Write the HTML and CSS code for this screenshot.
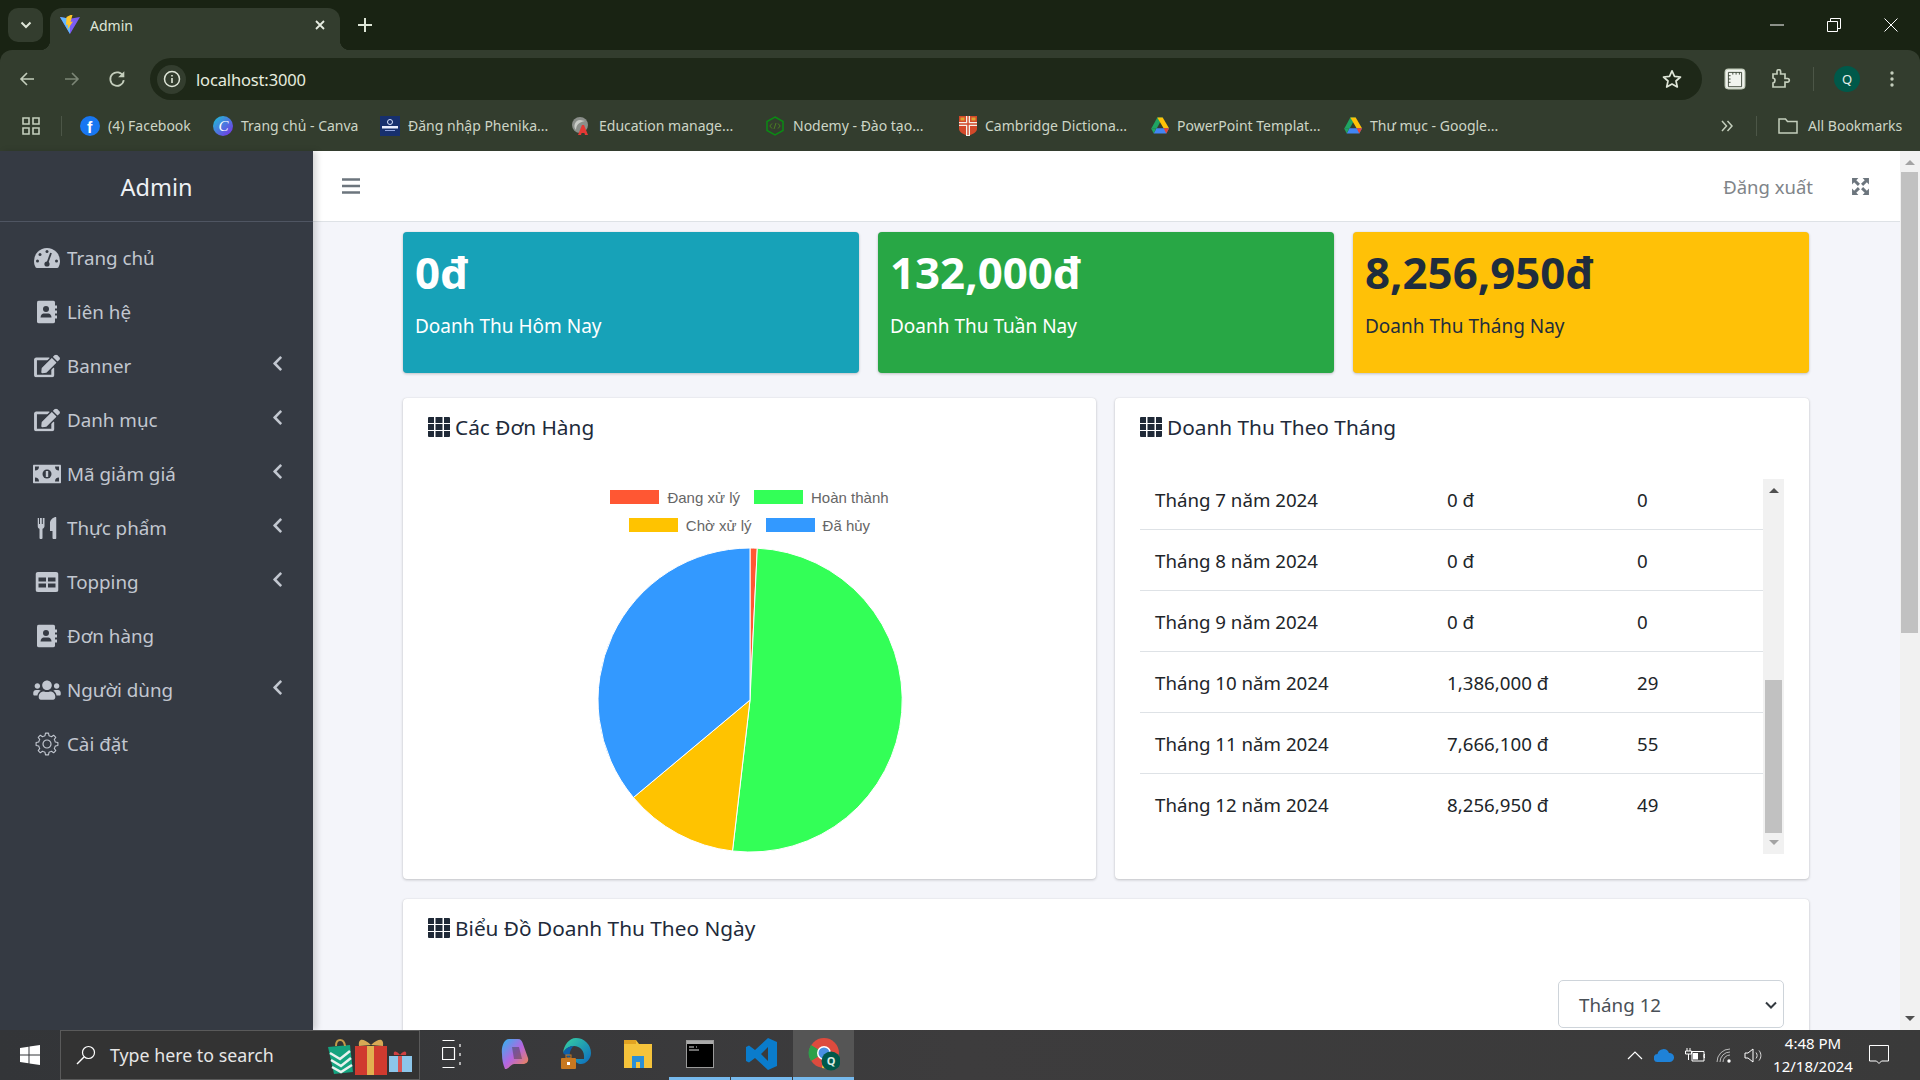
FILE: index.html
```html
<!DOCTYPE html>
<html lang="vi">
<head>
<meta charset="utf-8">
<title>Admin</title>
<link rel="stylesheet" href="styles.css">
</head>
<body>
<svg class="defs" width="0" height="0" aria-hidden="true">
  <defs>
    <symbol id="i-dash" viewBox="0 0 26 20"><path d="M13 0A13 13 0 0 0 0 13c0 2.400.6 4.600 1.700 6.500.3.300.7.500 1.100.5h20.400c.4 0 .8-.2 1.100-.5C25.400 17.600 26 15.400 26 13A13 13 0 0 0 13 0z" fill="#c2c7d0"/><circle cx="13" cy="3.500" r="1.500" fill="#353a43"/><circle cx="6" cy="6.500" r="1.500" fill="#353a43"/><circle cx="3.500" cy="13" r="1.500" fill="#353a43"/><circle cx="22.500" cy="13" r="1.500" fill="#353a43"/><circle cx="13" cy="16" r="2.600" fill="#353a43"/><path d="M13 16L17 5" stroke="#353a43" stroke-width="1.800"/></symbol>
    <symbol id="i-book" viewBox="0 0 20 23"><path d="M2 0h14a2 2 0 0 1 2 2v19a2 2 0 0 1-2 2H2a2 2 0 0 1-2-2V2a2 2 0 0 1 2-2z" fill="#c2c7d0"/><path d="M18 5h2v3h-2zM18 10h2v3h-2zM18 15h2v3h-2z" fill="#c2c7d0"/><circle cx="9" cy="8.500" r="3" fill="#353a43"/><path d="M3.500 17c0-2.500 2-4 3-4h5c1 0 3 1.500 3 4z" fill="#353a43"/></symbol>
    <symbol id="i-edit" viewBox="0 0 576 512"><path fill="#c2c7d0" d="M402.600 83.200l90.200 90.200c3.800 3.800 3.800 10 0 13.800L274.400 405.600l-92.800 10.300c-12.400 1.400-22.900-9.100-21.500-21.500l10.300-92.800L388.800 83.200c3.800-3.800 10-3.800 13.800 0zm162-22.900l-48.800-48.800c-15.200-15.200-39.900-15.200-55.200 0l-35.400 35.400c-3.800 3.800-3.800 10 0 13.800l90.200 90.200c3.800 3.800 10 3.800 13.800 0l35.400-35.400c15.200-15.300 15.200-40 0-55.200zM384 346.200V448H64V128h229.800c3.200 0 6.200-1.300 8.500-3.500l40-40c7.600-7.600 2.200-20.500-8.500-20.500H48C21.500 64 0 85.500 0 112v352c0 26.500 21.500 48 48 48h352c26.500 0 48-21.500 48-48V306.200c0-10.700-12.900-16-20.500-8.500l-40 40c-2.200 2.300-3.500 5.300-3.500 8.500z"/></symbol>
    <symbol id="i-money" viewBox="0 0 28 19"><rect width="28" height="19" rx="1" fill="#c2c7d0"/><circle cx="14" cy="9.500" r="4.500" fill="#353a43"/><rect x="12.800" y="6.500" width="2.400" height="6" fill="#c2c7d0"/><path d="M2 2h4a4 4 0 0 1-4 4zM26 2h-4a4 4 0 0 0 4 4zM2 17h4a4 4 0 0 0-4-4zM26 17h-4a4 4 0 0 1 4-4z" fill="#353a43"/></symbol>
    <symbol id="i-food" viewBox="0 0 19 22"><path d="M0 1h1.500v6h1V1h1.800v6h1V1H7v8c0 1.400-1 2.500-2 2.800V21a1 1 0 0 1-1 1H3a1 1 0 0 1-1-1v-9.200C1 11.500 0 10.400 0 9zM19 1v20a1 1 0 0 1-1 1h-2a1 1 0 0 1-1-1v-7h-2.500V6c0-3 3-5.500 5.500-6 .6 0 1 .4 1 1z" fill="#c2c7d0"/></symbol>
    <symbol id="i-table" viewBox="0 0 23 20"><rect width="23" height="20" rx="2.500" fill="#c2c7d0"/><path d="M3 5.500h7.500v4H3zM12.500 5.500H20v4h-7.500zM3 11.500h7.500v4H3zM12.500 11.500H20v4h-7.500z" fill="#353a43"/></symbol>
    <symbol id="i-users" viewBox="0 0 640 512"><path fill="#c2c7d0" d="M96 224c35.300 0 64-28.700 64-64s-28.700-64-64-64-64 28.700-64 64 28.700 64 64 64zm448 0c35.300 0 64-28.700 64-64s-28.700-64-64-64-64 28.700-64 64 28.700 64 64 64zm32 32h-64c-17.600 0-33.500 7.100-45.100 18.600 40.300 22.100 68.900 62 75.100 109.400h66c17.700 0 32-14.300 32-32v-32c0-35.300-28.700-64-64-64zm-256 0c61.900 0 112-50.100 112-112S381.900 32 320 32 208 82.100 208 144s50.100 112 112 112zm76.800 32h-8.300c-20.800 10-43.900 16-68.500 16s-47.600-6-68.500-16h-8.300C179.600 288 128 339.600 128 403.200V432c0 26.500 21.500 48 48 48h288c26.500 0 48-21.500 48-48v-28.800c0-63.600-51.600-115.200-115.200-115.200zm-223.700-13.400C161.500 263.100 145.600 256 128 256H64c-35.300 0-64 28.700-64 64v32c0 17.700 14.300 32 32 32h65.900c6.300-47.400 34.900-87.300 75.200-109.400z"/></symbol>
    <path id="tooth" d="M-3.250-7.850L-2-8.300-1.500-10.900H1.500L2-8.300 3.250-7.850" fill="none" stroke="#c2c7d0" stroke-width="1.100" stroke-linejoin="round"/>
    <symbol id="i-gear" viewBox="0 0 26 26"><g transform="translate(13 13)"><circle r="4" fill="none" stroke="#c2c7d0" stroke-width="1.200"/><use href="#tooth"/><use href="#tooth" transform="rotate(45)"/><use href="#tooth" transform="rotate(90)"/><use href="#tooth" transform="rotate(135)"/><use href="#tooth" transform="rotate(180)"/><use href="#tooth" transform="rotate(225)"/><use href="#tooth" transform="rotate(270)"/><use href="#tooth" transform="rotate(315)"/></g></symbol>
    <symbol id="i-left" viewBox="0 0 320 512"><path fill="#c2c7d0" d="M34.520 239.030L228.870 44.690c9.370-9.370 24.570-9.370 33.940 0l22.670 22.670c9.360 9.360 9.370 24.520.04 33.900L131.490 256l154.020 154.750c9.340 9.380 9.320 24.540-.04 33.900l-22.670 22.670c-9.370 9.370-24.570 9.370-33.940 0L34.520 272.970c-9.370-9.370-9.370-24.570 0-33.940z"/></symbol>
    <symbol id="i-th" viewBox="0 0 22 20"><path fill="#1f2937" d="M0 1a1 1 0 0 1 1-1h5v6H0zM7.500 0h7v6h-7zM16 0h5a1 1 0 0 1 1 1v5h-6zM0 7h6v6H0zM7.500 7h7v6h-7zM16 7h6v6h-6zM0 14h6v6H1a1 1 0 0 1-1-1zM7.500 14h7v6h-7zM16 14h6v5a1 1 0 0 1-1 1h-5z"/></symbol>
    <symbol id="i-drive" viewBox="0 0 20 18"><path d="M7 0h6l-3.500 6.500L6.500 12H0.500z" fill="#1fa463"/><path d="M7 0h6l7 12h-6z" fill="#ffc107"/><path d="M6 12h14l-3 6H3z" fill="#4285f4"/><path d="M0 12h6l-3 6z" fill="#1fa463"/><path d="M14 12h6l-3 6z" fill="#ea4335"/></symbol>
  </defs>
</svg>

<header class="browser">
  <div class="tabstrip">
    <div class="tab-search"><svg width="12" height="8" viewBox="0 0 12 8"><path d="M1.500 1.500L6 6l4.500-4.500" fill="none" stroke="#dfe6d8" stroke-width="2"/></svg></div>
    <div class="tab">
      <svg class="favicon" width="20" height="20" viewBox="0 0 20 20"><path d="M0 2l10 17L20 2l-10 1.800z" fill="#7c5cf5"/><path d="M0 2l10 17V3.800z" fill="#62b8ff"/><path d="M10.500 0L6.500 2l-.5 8 2-.5-.5 5L13 6.500l-2.500.5L12.500 0z" fill="#ffc62b"/></svg>
      <span class="tab-title">Admin</span>
      <svg class="tab-close" width="10" height="10" viewBox="0 0 10 10"><path d="M1 1l8 8M9 1l-8 8" stroke="#e7ede2" stroke-width="1.800"/></svg>
    </div>
    <svg class="new-tab" width="14" height="14" viewBox="0 0 14 14"><path d="M7 0v14M0 7h14" stroke="#dde5d6" stroke-width="2"/></svg>
    <div class="win-controls">
      <svg width="14" height="14" viewBox="0 0 14 14"><path d="M0 7h14" stroke="#fff" stroke-width="1"/></svg>
      <svg width="14" height="14" viewBox="0 0 14 14"><path d="M.5 3.500h10v10H.5zM3.500 3.500v-3h10v10h-3" fill="none" stroke="#fff"/></svg>
      <svg width="14" height="14" viewBox="0 0 14 14"><path d="M.5.500l13 13M13.500.500l-13 13" stroke="#fff"/></svg>
    </div>
  </div>
  <div class="toolbar">
    <div class="nav-icons">
      <svg width="18" height="16" viewBox="0 0 16 16"><path d="M15 8H2M8 2L2 8l6 6" fill="none" stroke="#c4cebc" stroke-width="1.600"/></svg>
      <svg width="18" height="16" viewBox="0 0 16 16"><path d="M1 8h13M8 2l6 6-6 6" fill="none" stroke="#7c8676" stroke-width="1.600"/></svg>
      <svg width="18" height="18" viewBox="0 0 16 16"><path d="M13.500 5.500A6 6 0 1 0 14 9" fill="none" stroke="#c4cebc" stroke-width="1.600"/><path d="M14.500 1v5.500H9z" fill="#c4cebc"/></svg>
    </div>
    <div class="omnibox">
      <div class="site-info"><svg width="18" height="18" viewBox="0 0 18 18"><circle cx="9" cy="9" r="7.500" fill="none" stroke="#dfe6d8" stroke-width="1.500"/><path d="M9 8v5M9 5v1.600" stroke="#dfe6d8" stroke-width="1.600"/></svg></div>
      <span class="url">localhost:3000</span>
      <svg class="star" width="20" height="20" viewBox="0 0 20 20"><path d="M10 1.800l2.500 5.600 6 .6-4.500 4 1.300 6L10 15l-5.300 3 1.300-6-4.500-4 6-.6z" fill="none" stroke="#dfe6d8" stroke-width="1.700" stroke-linejoin="round"/></svg>
    </div>
    <div class="tool-icons">
      <svg class="ti-a" width="22" height="22" viewBox="0 0 20 20"><rect x="1" y="1" width="18" height="18" rx="3" fill="#f1f4ee" stroke="#c4cebc"/><path d="M4 4h12v13H4z" fill="none" stroke="#333d2e" stroke-width=".8"/><path d="M4 7h2M4 10h2M4 13h2M8 4v2M11 4v2M14 4v2" stroke="#333d2e" stroke-width=".8"/></svg>
      <svg class="ti-b" width="20" height="20" viewBox="0 0 20 20"><path d="M2 5h4V2.500a1.800 1.800 0 0 1 3.600 0V5H14v4.500h2.500a1.800 1.800 0 0 1 0 3.600H14V18H2v-4a2.500 2.500 0 0 0 2-2.500A2.500 2.500 0 0 0 2 9z" fill="none" stroke="#c4cebc" stroke-width="1.700"/></svg>
      <span class="ti-sep"></span>
      <span class="avatar">Q</span>
      <svg class="ti-c" width="4" height="16" viewBox="0 0 4 16"><circle cx="2" cy="2" r="1.700" fill="#c4cebc"/><circle cx="2" cy="8" r="1.700" fill="#c4cebc"/><circle cx="2" cy="14" r="1.700" fill="#c4cebc"/></svg>
    </div>
  </div>
  <nav class="bookmarks">
    <svg class="apps" width="18" height="18" viewBox="0 0 18 18"><path d="M1 1h6v6H1zM11 1h6v6h-6zM1 11h6v6H1zM11 11h6v6h-6z" fill="none" stroke="#c4cebc" stroke-width="1.600"/></svg>
    <span class="bm-sep"></span>
    <a class="bm bm-fb"><svg width="20" height="20" viewBox="0 0 20 20"><circle cx="10" cy="10" r="10" fill="#1877f2"/><text x="7" y="17" class="svg-f">f</text></svg><span>(4) Facebook</span></a>
    <a class="bm bm-canva"><svg width="20" height="20" viewBox="0 0 20 20"><defs><linearGradient id="cv" x1="0" y1="0" x2="1" y2="1"><stop offset="0" stop-color="#19c5d6"/><stop offset="1" stop-color="#7d2ae8"/></linearGradient></defs><circle cx="10" cy="10" r="10" fill="url(#cv)"/><text x="5.500" y="15" class="svg-c">C</text></svg><span>Trang chủ - Canva</span></a>
    <a class="bm bm-phe"><svg width="20" height="20" viewBox="0 0 20 20"><rect width="20" height="20" fill="#17306e"/><circle cx="10" cy="6" r="2.500" fill="none" stroke="#dbe4ff"/><rect x="2" y="10" width="16" height="2.500" fill="#e8edff"/><rect x="5" y="14" width="10" height="1" fill="#8fa3dd"/></svg><span>Đăng nhập Phenika...</span></a>
    <a class="bm bm-edu"><svg width="20" height="20" viewBox="0 0 20 20"><circle cx="9" cy="9" r="8" fill="#8b8f8a"/><path d="M9 4a6 6 0 0 0-4 10c0-5 3-8 9-9z" fill="#c8cbc6"/><path d="M7 19l4-10h2l4 10h-3l-.6-2h-2.800l-.6 2z" fill="#e53935"/></svg><span>Education manage...</span></a>
    <a class="bm bm-node"><svg width="20" height="20" viewBox="0 0 20 20"><path d="M10 1l8 4.500v9L10 19l-8-4.500v-9z" fill="none" stroke="#0b8a14" stroke-width="1.500"/><path d="M7 7.500L4.800 10 7 12.500M13 7.500l2.200 2.500-2.200 2.500M11 7l-2 6" fill="none" stroke="#4a7d22" stroke-width="1"/></svg><span>Nodemy - Đào tạo...</span></a>
    <a class="bm bm-cam"><svg width="18" height="20" viewBox="0 0 18 20"><path d="M0 0h18v13c0 3-4 5-9 7-5-2-9-4-9-7z" fill="#d2492a"/><path d="M7 0h4v20H7zM0 6h18v4H0z" fill="#f4efe8"/><path d="M8.300 0h1.400v19H8.300zM0 7.300h18v1.400H0z" fill="#d2492a"/><path d="M1.500 1.500h4v3h-4zM12.500 1.500h4v3h-4z" fill="#d9a531"/></svg><span>Cambridge Dictiona...</span></a>
    <a class="bm bm-drive"><svg width="18" height="17"><use href="#i-drive"/></svg><span>PowerPoint Templat...</span></a>
    <a class="bm bm-dir"><svg width="18" height="17"><use href="#i-drive"/></svg><span>Thư mục - Google...</span></a>
    <svg class="more" width="12" height="12" viewBox="0 0 12 12"><path d="M1 1l4.500 5L1 11M6.500 1l4.500 5-4.500 5" fill="none" stroke="#c4cebc" stroke-width="1.500"/></svg>
    <span class="bm-sep bm-sep-r"></span>
    <a class="bm bm-all"><svg width="20" height="16" viewBox="0 0 20 16"><path d="M1 1h6.500l2 2.500H19v11.500H1z" fill="none" stroke="#c4cebc" stroke-width="1.500"/></svg><span>All Bookmarks</span></a>
  </nav>
</header>

<div class="viewport">
  <aside class="sidebar">
    <div class="brand">Admin</div>
    <ul class="menu">
      <li class="menu-item"><svg class="mi mi-dash"><use href="#i-dash"/></svg><span>Trang chủ</span></li>
      <li class="menu-item"><svg class="mi mi-book"><use href="#i-book"/></svg><span>Liên hệ</span></li>
      <li class="menu-item"><svg class="mi mi-edit"><use href="#i-edit"/></svg><span>Banner</span><svg class="chev"><use href="#i-left"/></svg></li>
      <li class="menu-item"><svg class="mi mi-edit"><use href="#i-edit"/></svg><span>Danh mục</span><svg class="chev"><use href="#i-left"/></svg></li>
      <li class="menu-item"><svg class="mi mi-money"><use href="#i-money"/></svg><span>Mã giảm giá</span><svg class="chev"><use href="#i-left"/></svg></li>
      <li class="menu-item"><svg class="mi mi-food"><use href="#i-food"/></svg><span>Thực phẩm</span><svg class="chev"><use href="#i-left"/></svg></li>
      <li class="menu-item"><svg class="mi mi-table"><use href="#i-table"/></svg><span>Topping</span><svg class="chev"><use href="#i-left"/></svg></li>
      <li class="menu-item"><svg class="mi mi-book"><use href="#i-book"/></svg><span>Đơn hàng</span></li>
      <li class="menu-item"><svg class="mi mi-users"><use href="#i-users"/></svg><span>Người dùng</span><svg class="chev"><use href="#i-left"/></svg></li>
      <li class="menu-item"><svg class="mi mi-gear"><use href="#i-gear"/></svg><span>Cài đặt</span></li>
    </ul>
  </aside>

  <main class="main">
    <div class="topbar">
      <svg class="burger" width="18" height="16" viewBox="0 0 18 16"><path d="M0 1.500h18M0 8h18M0 14.500h18" stroke="#6c757d" stroke-width="2.400"/></svg>
      <span class="logout">Đăng xuất</span>
      <svg class="expand" width="19" height="19" viewBox="0 0 18 18"><path d="M1 1h6L5 3l3.500 3.500-2 2L3 5 1 7zM17 1v6l-2-2-3.500 3.500-2-2L13 3l-2-2zM1 17v-6l2 2 3.500-3.500 2 2L5 15l2 2zM17 17h-6l2-2-3.500-3.500 2-2L15 13l2-2z" fill="#6c757d"/></svg>
    </div>
    <div class="content">
      <section class="stats">
        <div class="stat stat-info"><div class="stat-num">0đ</div><div class="stat-label">Doanh Thu Hôm Nay</div></div>
        <div class="stat stat-success"><div class="stat-num">132,000đ</div><div class="stat-label">Doanh Thu Tuần Nay</div></div>
        <div class="stat stat-warning"><div class="stat-num">8,256,950đ</div><div class="stat-label">Doanh Thu Tháng Nay</div></div>
      </section>
      <section class="duo">
        <div class="panel">
          <h3 class="panel-title"><svg class="th"><use href="#i-th"/></svg>Các Đơn Hàng</h3>
          <div class="legend">
            <div class="legend-row"><span class="lg"><i class="sw sw-red"></i>Đang xử lý</span><span class="lg"><i class="sw sw-green"></i>Hoàn thành</span></div>
            <div class="legend-row"><span class="lg"><i class="sw sw-yellow"></i>Chờ xử lý</span><span class="lg"><i class="sw sw-blue"></i>Đã hủy</span></div>
          </div>
          <svg class="pie" width="306" height="306" viewBox="-153 -153 306 306">
            <g stroke="#fff" stroke-width="1">
              <path d="M0 0V-152A152 152 0 0 1 7.300-151.800z" fill="#ff5733"/>
              <path d="M0 0L7.300-151.800A152 152 0 1 1-17.500 151z" fill="#33ff57"/>
              <path d="M0 0L-17.500 151A152 152 0 0 1-116.600 97.500z" fill="#ffc300"/>
              <path d="M0 0L-116.600 97.500A152 152 0 0 1 0-152z" fill="#3399ff"/>
            </g>
          </svg>
        </div>
        <div class="panel">
          <h3 class="panel-title"><svg class="th"><use href="#i-th"/></svg>Doanh Thu Theo Tháng</h3>
          <div class="scroller">
            <div class="rows">
              <div class="row"><span class="c1">Tháng 7 năm 2024</span><span class="c2">0 đ</span><span>0</span></div>
              <div class="row"><span class="c1">Tháng 8 năm 2024</span><span class="c2">0 đ</span><span>0</span></div>
              <div class="row"><span class="c1">Tháng 9 năm 2024</span><span class="c2">0 đ</span><span>0</span></div>
              <div class="row"><span class="c1">Tháng 10 năm 2024</span><span class="c2">1,386,000 đ</span><span>29</span></div>
              <div class="row"><span class="c1">Tháng 11 năm 2024</span><span class="c2">7,666,100 đ</span><span>55</span></div>
              <div class="row"><span class="c1">Tháng 12 năm 2024</span><span class="c2">8,256,950 đ</span><span>49</span></div>
            </div>
            <div class="sbar sbar-in">
              <i class="arr arr-up"></i>
              <i class="thumb thumb-in"></i>
              <i class="arr arr-down arr-dim"></i>
            </div>
          </div>
        </div>
      </section>
      <section class="panel panel-chart">
        <h3 class="panel-title"><svg class="th"><use href="#i-th"/></svg>Biểu Đồ Doanh Thu Theo Ngày</h3>
        <div class="select-row">
          <div class="select"><span>Tháng 12</span><svg width="12" height="8" viewBox="0 0 12 8"><path d="M1 1.500l5 5 5-5" fill="none" stroke="#343a40" stroke-width="2"/></svg></div>
        </div>
      </section>
    </div>
  </main>

  <div class="sbar sbar-page">
    <i class="arr arr-up arr-dim"></i>
    <i class="thumb thumb-page"></i>
    <i class="arr arr-down"></i>
  </div>
</div>

<footer class="taskbar">
  <svg class="win" width="20" height="20" viewBox="0 0 20 20"><path d="M0 3l8.500-1.200v7.600H0zM9.500 1.600L20 0v9.400H9.500zM0 10.500h8.500v7.700L0 17zM9.500 10.500H20V20L9.500 18.400z" fill="#fff"/></svg>
  <div class="searchbox">
    <svg width="20" height="20" viewBox="0 0 20 20"><circle cx="12.500" cy="7.500" r="6" fill="none" stroke="#fff" stroke-width="1.200"/><path d="M8 12l-7 7" stroke="#fff" stroke-width="1.400"/></svg>
    <span class="search-text">Type here to search</span>
    <svg class="gifts" width="86" height="40" viewBox="0 0 86 40"><path d="M0 12l22-2 3 27-19 2z" fill="#14a37f"/><path d="M2 18l10 6 10-8M3 25l10 6 10-8M4 32l9 5 11-7" fill="none" stroke="#e8f2ee" stroke-width="2.500"/><path d="M8 11c0-8 8-8 9 0" fill="none" stroke="#c19a4a" stroke-width="2"/><rect x="27" y="11" width="32" height="29" fill="#d03a2f"/><rect x="39" y="11" width="7" height="29" fill="#e2b050"/><path d="M43 10C34 2 30 4 31 11zM43 10c9-8 13-6 12 1z" fill="#d8a955"/><rect x="61" y="21" width="23" height="16" fill="#8cc6ea"/><rect x="70" y="21" width="4" height="16" fill="#d85656"/><path d="M72 20c-5-6-7-3-6 0zM72 20c5-6 7-3 6 0z" fill="#d04040"/></svg>
  </div>
  <div class="task-icons">
    <div class="tk"><svg width="20" height="30" viewBox="0 0 20 30"><path d="M.5 1.500h12M.5 8.500h12M.5 20.500h12M.5 28.500h12M.5 8.500v12h12v-12M18 5v3M18 14v3M18 23v3" fill="none" stroke="#fff" stroke-width="1.200"/></svg></div>
    <div class="tk"><svg width="32" height="32" viewBox="0 0 32 32"><defs><linearGradient id="co" x1="0" y1="0" x2="1" y2="1"><stop offset="0" stop-color="#2ab7f0"/><stop offset=".5" stop-color="#b565e0"/><stop offset="1" stop-color="#f58a3c"/></linearGradient></defs><path d="M11 1h9c3 0 4 2 5 5l5 14c1 4-2 6-5 6h-9c-3 0-5 5-9 5-2-5-3-9-3-15C3 9 6 1 11 1z" fill="url(#co)"/><path d="M14 9h7l3 12h-8z" fill="#3a3a3a" opacity=".45"/></svg></div>
    <div class="tk"><svg width="32" height="34" viewBox="0 0 32 34"><defs><linearGradient id="ed" x1="0" y1="0" x2="1" y2="1"><stop offset="0" stop-color="#37d3a0"/><stop offset="1" stop-color="#0c6bc2"/></linearGradient></defs><path d="M16 1a15 15 0 0 1 15 15c0 6-5 11-10 11-3 0-6-2-6-5h9c1-8-4-13-10-13-5 0-9 3-11 7C4 8 9 1 16 1z" fill="url(#ed)"/><path d="M3 16c2-4 6-7 11-7-3 2-5 6-4 13z" fill="#0d5fa8"/><rect x="1" y="21" width="15" height="11" rx="1" fill="#c77820"/><rect x="6" y="18" width="5" height="3" fill="none" stroke="#c77820"/><rect x="7" y="25" width="3" height="3" fill="#fff"/></svg></div>
    <div class="tk"><svg width="28" height="32" viewBox="0 0 28 32"><path d="M0 2h12l3 4h13v24H0z" fill="#f5c33b"/><path d="M0 2h12v4H0z" fill="#e2a322"/><path d="M8 18h12v12H8z" fill="#2a8fd6"/><rect x="12" y="24" width="4" height="6" fill="#f5c33b"/></svg></div>
    <div class="tk tk-on"><svg width="28" height="28" viewBox="0 0 28 28"><rect x=".5" y=".5" width="27" height="27" fill="#000" stroke="#9a9a9a"/><rect x="1" y="1" width="26" height="3" fill="#aaa"/><path d="M3 7h5M10 7h1M3 10h10" stroke="#ddd"/></svg></div>
    <div class="tk tk-on"><svg width="31" height="32" viewBox="0 0 31 32"><path d="M22 0l9 4v24l-9 4-13-12-6 4.500-3-1.500v-14l3-1.500L9 12zM22 9l-7 7 7 7z" fill="#0a7ccc"/></svg></div>
    <div class="tk tk-on tk-active"><svg width="32" height="34" viewBox="0 0 32 34"><circle cx="16" cy="16" r="15" fill="#dd4b3e"/><path d="M16 16L3 24A15 15 0 0 1 3 8z" fill="#2ca04a"/><path d="M16 16l13 8a15 15 0 0 1-15 7z" fill="#f0c23a"/><circle cx="16" cy="16" r="7" fill="#fff"/><circle cx="16" cy="16" r="5.500" fill="#4a90e2"/><circle cx="23" cy="24" r="9.500" fill="#00594a"/><text x="23" y="28" class="svg-q">Q</text></svg></div>
  </div>
  <div class="tray">
    <svg width="16" height="9" viewBox="0 0 16 9"><path d="M1 8l7-7 7 7" fill="none" stroke="#fff" stroke-width="1.200"/></svg>
    <svg width="20" height="13" viewBox="0 0 20 13"><path d="M4 13a4 4 0 0 1-.5-8A6 6 0 0 1 15 4a4.500 4.500 0 0 1 1 9z" fill="#1f82d8"/></svg>
    <svg width="20" height="14" viewBox="0 0 20 14"><path d="M7 3.500h12v9.500H7z" fill="none" stroke="#fff"/><path d="M8 5h5v6.500H8z" fill="#fff"/><path d="M19 6.500h1v3h-1zM2 0v3M5 0v3M.5 3h6v3h-6zM3.500 6v6" fill="none" stroke="#fff"/></svg>
    <svg width="17" height="15" viewBox="0 0 17 15"><path d="M1 14A13 13 0 0 1 14 1M4 14A10 10 0 0 1 14 4M7 14a7 7 0 0 1 7-7" fill="none" stroke="#bbb"/><circle cx="13" cy="13" r="1.700" fill="#fff"/></svg>
    <svg width="20" height="15" viewBox="0 0 20 15"><path d="M1 5h3l5-4v13l-5-4H1z" fill="none" stroke="#fff"/><path d="M12 4.500c1.500 2 1.500 4 0 6M15 2.500c2.500 3 2.500 7 0 10" fill="none" stroke="#ddd"/></svg>
  </div>
  <div class="clock"><span>4:48 PM</span><span>12/18/2024</span></div>
  <svg class="notif" width="20" height="20" viewBox="0 0 20 20"><path d="M.5.500h19v15.500h-7l-2.500 2.500L7.500 16h-7z" fill="none" stroke="#fff"/></svg>
</footer>
</body>
</html>
```

FILE: styles.css
```css
* { box-sizing: border-box; margin: 0; padding: 0; }
html, body { height: 100%; overflow: hidden; }
body { display: flex; flex-direction: column; font-family: "Noto Sans", "Open Sans", sans-serif; width: 1920px; height: 1080px; background: #f4f5fa; }
.defs { position: absolute; }
i { display: block; }
ul { list-style: none; }

/* browser chrome */
.browser { height: 151px; flex: none; background: #192313; color: #d5dccd; font-size: 13px; }
.tabstrip { height: 50px; display: flex; align-items: flex-start; position: relative; }
.tab-search { width: 35px; height: 34px; margin: 8px 0 0 8px; border-radius: 10px; background: #333d2e; display: flex; align-items: center; justify-content: center; }
.tab { width: 290px; height: 42px; margin: 8px 0 0 7px; background: #333d2e; border-radius: 12px 12px 0 0; display: flex; align-items: center; padding: 0 15px 8px 10px; position: relative; }
.tab::before, .tab::after { content: ""; position: absolute; bottom: 0; width: 10px; height: 10px; }
.tab::before { left: -10px; background: radial-gradient(circle at 0 0, transparent 10px, #333d2e 10.500px); }
.tab::after { right: -10px; background: radial-gradient(circle at 100% 0, transparent 10px, #333d2e 10.500px); }
.tab-title { margin-left: 10px; flex: 1; font-size: 14px; color: #dfe6d8; }
.new-tab { margin: 18px 0 0 18px; }
.win-controls { margin-left: auto; display: flex; gap: 43px; padding: 18px 22px 0 0; }
.toolbar { height: 50px; background: #333d2e; border-radius: 12px 12px 0 0; display: flex; align-items: center; padding-right: 20px; }
.nav-icons { width: 150px; padding: 8px 0 0 18px; display: flex; gap: 27px; align-items: center; }
.omnibox { width: 1552px; height: 42px; border-radius: 21px; background: #1e2818; display: flex; align-items: center; padding: 0 20px 0 7px; flex: none; margin-top: 8px; }
.site-info { width: 29px; height: 29px; border-radius: 50%; background: #333d2e; display: flex; align-items: center; justify-content: center; }
.url { margin-left: 10px; font-size: 16.500px; color: #e6ecdf; letter-spacing: -.15px; flex: 1; }
.tool-icons { position: relative; flex: 1; display: flex; align-items: center; padding: 8px 0 0 22px; }
.ti-b { margin-left: 25px; }
.ti-sep { width: 1px; height: 24px; background: #4c5647; margin-left: 22px; }
.avatar { width: 26px; height: 26px; margin-left: 20px; border-radius: 50%; background: #00594a; color: #e6f0ea; font-size: 13px; display: flex; align-items: center; justify-content: center; }
.ti-c { margin-left: 30px; }
.bookmarks { height: 51px; background: #333d2e; display: flex; align-items: center; padding: 0 0 0 22px; }
.apps { flex: none; }
.bm-sep { width: 1px; height: 20px; background: #4c5647; margin: 0 18px 0 21px; flex: none; }
.bm { display: flex; align-items: center; gap: 8px; flex: none; font-size: 14px; color: #cdd5c6; white-space: nowrap; }
.bm-fb { width: 133px; }
.bm-canva { width: 167px; }
.bm-phe { width: 191px; }
.bm-edu { width: 194px; }
.bm-node { width: 194px; }
.bm-cam { width: 192px; }
.bm-drive { width: 193px; }
.bm-dir { width: 377px; }
.more { flex: none; }
.bm-sep-r { margin: 0 21px 0 23px; }
.bm-all { gap: 10px; }
.svg-f { font: bold 16px "Liberation Sans", sans-serif; fill: #fff; }
.svg-c { font: italic 15px "Liberation Serif", serif; fill: #fff; }
.svg-q { font: bold 11px "Noto Sans", sans-serif; fill: #dcebe4; text-anchor: middle; }

/* app */
.viewport { flex: 1; display: flex; min-height: 0; }
.sidebar { width: 313px; flex: none; background: #353a43; box-shadow: 4px 0 6px rgba(0,0,0,.15); position: relative; z-index: 2; color: #c2c7d0; }
.brand { height: 71px; border-bottom: 1px solid #4f5562; display: flex; align-items: center; justify-content: center; font-size: 23.500px; color: #eef0f4; padding-top: 2px; }
.menu { padding-top: 9px; }
.menu-item { height: 54px; display: flex; align-items: center; font-size: 18.800px; position: relative; padding-left: 67px; }
.mi { position: absolute; left: 47px; top: 50%; transform: translate(-50%, -50%); }
.mi-dash { width: 26px; height: 20px; }
.mi-book { width: 20px; height: 23px; }
.mi-edit { width: 26px; height: 23px; }
.mi-money { width: 28px; height: 19px; }
.mi-food { width: 19px; height: 22px; }
.mi-table { width: 23px; height: 20px; }
.mi-users { width: 28px; height: 22px; }
.mi-gear { width: 26px; height: 26px; }
.chev { position: absolute; left: 272px; top: 16px; width: 11px; height: 17px; }

.main { flex: 1; min-width: 0; display: flex; flex-direction: column; overflow: hidden; }
.topbar { height: 71px; flex: none; background: #fff; border-bottom: 1px solid #dee2e6; display: flex; align-items: center; padding: 0 30px 0 29px; }
.logout { margin-left: auto; font-size: 18.500px; color: #808489; margin-right: 38px; }
.content { padding: 10px 91px 0 90px; display: flex; flex-direction: column; }
.stats { display: grid; grid-template-columns: repeat(3, 456px); gap: 19px; }
.stat { height: 141px; border-radius: 4px; padding: 13px 12px; color: #fff; box-shadow: 0 0 1px rgba(0,0,0,.13), 0 1px 3px rgba(0,0,0,.2); }
.stat-info { background: #17a2b8; }
.stat-success { background: #28a745; }
.stat-warning { background: #ffc107; color: #1f2d3d; }
.stat-num { font-size: 43.800px; font-weight: 700; line-height: 54px; }
.stat-label { font-size: 19px; line-height: 27px; margin-top: 14px; }
.duo { display: grid; grid-template-columns: 693px 694px; gap: 19px; margin-top: 25px; }
.panel { background: #fff; border-radius: 4px; box-shadow: 0 0 1px rgba(0,0,0,.13), 0 1px 3px rgba(0,0,0,.2); height: 481px; padding: 14px 25px 0; }
.panel-title { font-size: 20.800px; font-weight: 400; line-height: 30px; color: #212a3a; display: flex; align-items: center; }
.th { width: 22px; height: 20px; margin-right: 5px; flex: none; }
.legend { margin-top: 41px; display: flex; flex-direction: column; }
.legend-row { height: 28px; display: flex; justify-content: center; gap: 14px; align-items: center; }
.lg { display: flex; align-items: center; gap: 8px; font: 15px "Liberation Sans", sans-serif; color: #666; }
.sw { width: 49px; height: 14px; }
.sw-red { background: #ff5733; }
.sw-green { background: #33ff57; }
.sw-yellow { background: #ffc300; }
.sw-blue { background: #3399ff; }
.pie { display: block; margin: 8px auto 0; }
.scroller { margin-top: 37px; height: 375px; display: flex; width: 644px; }
.rows { width: 623px; overflow: hidden; }
.row { height: 61px; display: flex; align-items: center; padding-left: 15px; font-size: 18.700px; color: #212529; border-bottom: 1px solid #dee2e6; }
.row:first-child { height: 51px; padding-bottom: 9px; }
.row:last-child { border-bottom: 0; }
.c1 { width: 292px; }
.c2 { width: 190px; }
.sbar { display: flex; flex-direction: column; align-items: center; background: #f1f1f1; flex: none; }
.sbar-in { width: 21px; height: 375px; position: relative; }
.thumb { background: #c1c1c1; position: absolute; }
.thumb-in { left: 2px; width: 17px; top: 201px; height: 153px; }
.sbar-page { width: 20px; position: relative; z-index: 1; }
.thumb-page { left: 1px; width: 17px; top: 21px; height: 461px; }
.arr { width: 0; height: 0; border-left: 5px solid transparent; border-right: 5px solid transparent; position: absolute; }
.arr-up { border-bottom: 5px solid #505050; top: 9px; }
.arr-down { border-top: 5px solid #505050; bottom: 9px; }
.arr-dim.arr-up { border-bottom-color: #a3a3a3; }
.arr-dim.arr-down { border-top-color: #a3a3a3; }
.panel-chart { margin-top: 20px; flex: none; height: 300px; }
.select-row { display: flex; justify-content: flex-end; margin-top: 37px; }
.select { width: 226px; height: 48px; border: 1px solid #ced4da; border-radius: 5px; padding: 2px 6px 0 20px; font-size: 18.800px; color: #495057; display: flex; align-items: center; justify-content: space-between; }

/* taskbar */
.taskbar { height: 50px; flex: none; background: linear-gradient(90deg, #333538, #3d3c3d 50%, #3a3a3a); display: flex; align-items: center; position: relative; z-index: 3; color: #fff; }
.win { margin-left: 20px; flex: none; }
.searchbox { width: 360px; height: 50px; margin-left: 20px; background: #333; border: 1px solid #5a5a5a; display: flex; align-items: center; padding-left: 15px; flex: none; }
.search-text { margin-left: 14px; font-size: 17.800px; color: #e6e6e6; flex: 1; }
.gifts { margin-right: 5px; flex: none; }
.task-icons { display: flex; height: 50px; margin-left: 1px; }
.tk { width: 61px; height: 50px; display: flex; align-items: center; justify-content: center; border-bottom: 3px solid transparent; margin-right: 1px; }
.tk-on { border-bottom-color: #76b9ed; }
.tk-active { background: #555; }
.tray { margin-left: auto; display: flex; align-items: center; gap: 11px; }
.clock { margin-left: 11px; width: 76px; display: flex; flex-direction: column; align-items: center; font-size: 15px; line-height: 23px; }
.notif { margin: 0 31px 0 18px; flex: none; }
```
